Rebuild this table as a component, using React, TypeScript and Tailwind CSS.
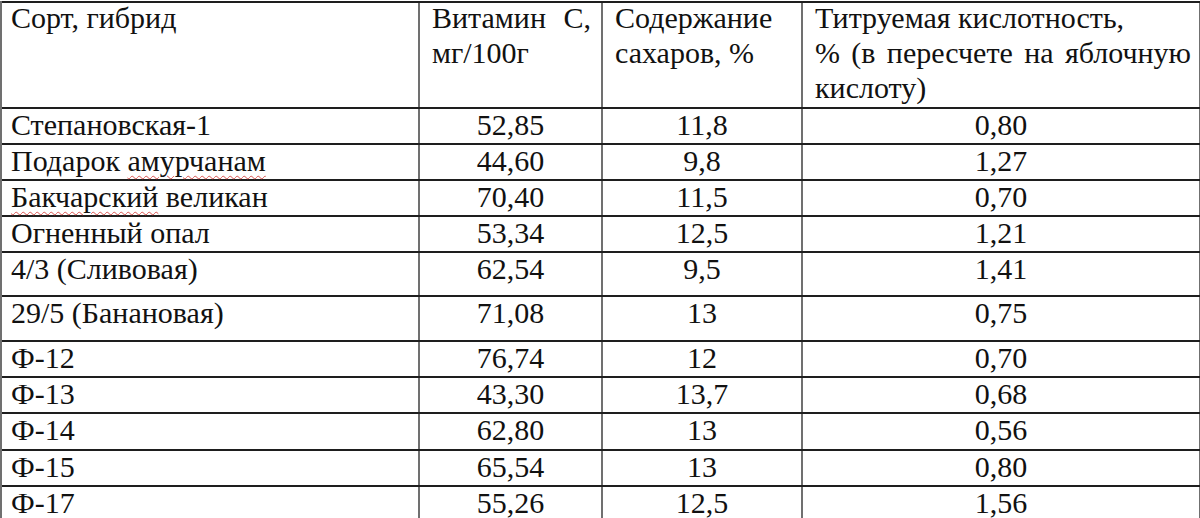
import React from 'react';

type Row = {
  name: React.ReactNode;
  vit: string;
  sugar: string;
  acid: string;
  h: string;
};

// spell-check squiggle like in the Word screenshot
const Squiggle = ({ children }: { children: React.ReactNode }) => (
  <span className="underline decoration-wavy decoration-[#d9534f] decoration-1 underline-offset-[4px]">
    {children}
  </span>
);

const rows: Row[] = [
  { name: 'Степановская-1', vit: '52,85', sugar: '11,8', acid: '0,80', h: 'h-[36px]' },
  { name: <>Подарок <Squiggle>амурчанам</Squiggle></>, vit: '44,60', sugar: '9,8', acid: '1,27', h: 'h-[36px]' },
  { name: <><Squiggle>Бакчарский</Squiggle> великан</>, vit: '70,40', sugar: '11,5', acid: '0,70', h: 'h-[36px]' },
  { name: 'Огненный опал', vit: '53,34', sugar: '12,5', acid: '1,21', h: 'h-[36px]' },
  { name: '4/3 (Сливовая)', vit: '62,54', sugar: '9,5', acid: '1,41', h: 'h-[44px]' },
  { name: '29/5 (Банановая)', vit: '71,08', sugar: '13', acid: '0,75', h: 'h-[45px]' },
  { name: 'Ф-12', vit: '76,74', sugar: '12', acid: '0,70', h: 'h-[36px]' },
  { name: 'Ф-13', vit: '43,30', sugar: '13,7', acid: '0,68', h: 'h-[36px]' },
  { name: 'Ф-14', vit: '62,80', sugar: '13', acid: '0,56', h: 'h-[37px]' },
  { name: 'Ф-15', vit: '65,54', sugar: '13', acid: '0,80', h: 'h-[36px]' },
  { name: 'Ф-17', vit: '55,26', sugar: '12,5', acid: '1,56', h: 'h-[36px]' },
];

const grid = 'grid grid-cols-[416px_183px_200px_400px] border-t-2 border-[#1e1e1e]';
const vline = 'border-l-2 border-[#707070]';
const cell = "font-['Liberation_Serif'] text-[30px] text-[#111]";

export default function App() {
  return (
    <div className="w-[1200px] h-[518px] overflow-hidden bg-white">
      <div className="mt-px border-l-2 border-[#707070]">
        {/* header */}
        <div className={`${grid} h-[106px]`}>
          <div className={`${cell} pl-[9px] pr-2 leading-[35px] -mt-[3px]`}>Сорт, гибрид</div>
          <div className={`${vline} pl-[12px] pr-[10px]`}>
            <div className={`${cell} leading-[35px] -mt-[3px] text-justify`}>Витамин С, мг/100г</div>
          </div>
          <div className={`${vline} pl-[12px] pr-[10px]`}>
            <div className={`${cell} leading-[35px] -mt-[3px]`}>Содержание сахаров, %</div>
          </div>
          <div className={`${vline} pl-[12px] pr-[8px] border-r-2`}>
            <div className={`${cell} leading-[35px] -mt-[3px] text-justify`}>
              Титруемая кислотность,
              <br />% (в пересчете на яблочную кислоту)
            </div>
          </div>
        </div>

        {/* data rows */}
        {rows.map((r, i) => (
          <div key={i} className={`${grid} ${r.h}`}>
            <div className={`${cell} pl-[9px] leading-[30px] pt-px whitespace-nowrap`}>{r.name}</div>
            <div className={`${cell} ${vline} text-center leading-[30px] pt-px`}>{r.vit}</div>
            <div className={`${cell} ${vline} text-center leading-[30px] pt-px`}>{r.sugar}</div>
            <div className={`${cell} ${vline} border-r-2 text-center leading-[30px] pt-px`}>{r.acid}</div>
          </div>
        ))}
      </div>
    </div>
  );
}
